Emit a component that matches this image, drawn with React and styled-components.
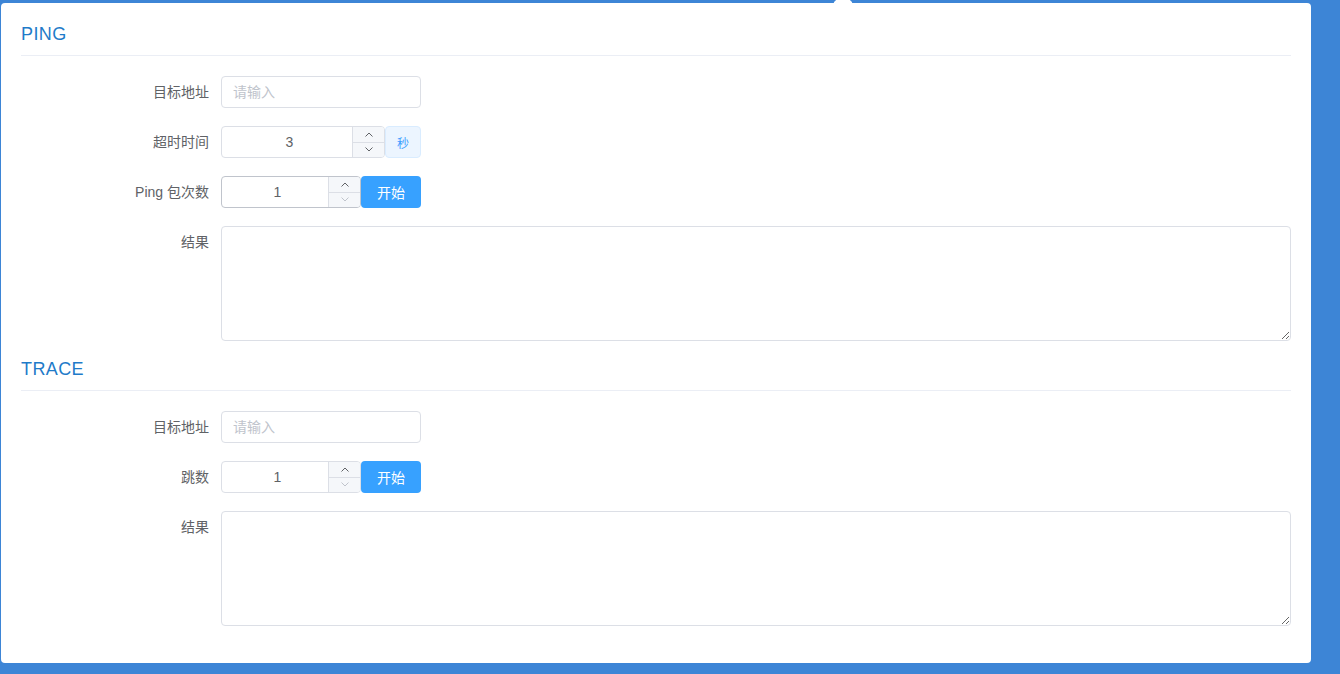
import React from "react";
import styled, { createGlobalStyle } from "styled-components";

const Global = createGlobalStyle`
  html, body { margin: 0; padding: 0; }
  body {
    background: #3d85d6;
    height: 674px;
    overflow: hidden;
    font-family: "Liberation Sans", "Noto Sans CJK SC", Arial, sans-serif;
    font-size: 14px;
    color: #606266;
  }
  * { box-sizing: border-box; }
`;

const Card = styled.div`
  position: relative;
  margin: 3px 0 0 1px;
  width: 1310px;
  background: #fff;
  border-radius: 4px;
  padding: 3px 20px 37px 20px;
`;

const Arrow = styled.div`
  position: absolute;
  top: -6.6px;
  left: 835px;
  width: 14px;
  height: 14px;
  background: #fff;
  transform: rotate(45deg);
  border-radius: 2px;
`;

const SectionTitle = styled.div`
  padding: 16px 0 9px;
  line-height: 24px;
  font-size: 18px;
  letter-spacing: 0.4px;
  color: #1f7bc9;
  border-bottom: 1px solid #ebeef5;
`;

const Form = styled.div`
  margin-top: 20px;
`;

const Row = styled.div`
  display: flex;
  align-items: flex-start;
  margin-bottom: ${(p) => (p.$last ? 0 : 18)}px;
`;

const Label = styled.label`
  flex: 0 0 200px;
  width: 200px;
  padding-right: 12px;
  text-align: right;
  line-height: 32px;
  font-size: 14px;
  color: #606266;
`;

const TextInput = styled.input`
  width: 200px;
  height: 32px;
  border: 1px solid #dcdfe6;
  border-radius: 4px;
  padding: 0 11px;
  font-family: inherit;
  font-size: 14px;
  color: #606266;
  outline: none;
  &::placeholder { color: #c0c4cc; }
`;

const Group = styled.div`
  display: flex;
  width: 200px;
  height: 32px;
`;

const NumberBox = styled.div`
  position: relative;
  flex: 1;
  height: 32px;
  border: 1px solid ${(p) => (p.$dark ? "#c0c4cc" : "#dcdfe6")};
  border-radius: 4px;
  display: flex;
  overflow: hidden;
`;

const NumberValue = styled.div`
  flex: 1;
  padding: 0 10px 0 15px;
  text-align: center;
  line-height: 30px;
  font-size: 14px;
  color: #606266;
`;

const Spinner = styled.div`
  width: 32px;
  display: flex;
  flex-direction: column;
  border-left: 1px solid #dcdfe6;
  background: #f5f7fa;
`;

const SpinBtn = styled.div`
  flex: 1;
  display: flex;
  align-items: center;
  justify-content: center;
  color: ${(p) => (p.$disabled ? "#c0c4cc" : "#606266")};
  & + & { border-top: 1px solid #dcdfe6; }
`;

const Append = styled.div`
  width: 36px;
  height: 32px;
  background: #ecf5ff;
  border: 1px solid #d9ecff;
  border-radius: 4px;
  color: #409eff;
  font-size: 12px;
  display: flex;
  align-items: center;
  justify-content: center;
`;

const Button = styled.button`
  width: 60px;
  height: 32px;
  border: none;
  border-radius: 4px;
  background: #37a1ff;
  color: #fff;
  font-family: inherit;
  font-size: 14px;
  padding: 0;
  cursor: pointer;
`;

const TextArea = styled.textarea`
  display: block;
  flex: 1;
  height: 115px;
  border: 1px solid #dcdfe6;
  border-radius: 4px;
  padding: 5px 11px;
  font-family: inherit;
  font-size: 14px;
  color: #606266;
  outline: none;
  resize: vertical;
  margin: 0;
`;

const Chevron = ({ up }) => (
  <svg width="8" height="5" viewBox="0 0 8 5" fill="none">
    <polyline
      points={up ? "0.5,4.5 4,1 7.5,4.5" : "0.5,0.5 4,4 7.5,0.5"}
      stroke="currentColor"
      strokeWidth="1"
    />
  </svg>
);

const NumberInput = ({ value, dark, downDisabled }) => (
  <NumberBox $dark={dark}>
    <NumberValue>{value}</NumberValue>
    <Spinner>
      <SpinBtn>
        <Chevron up />
      </SpinBtn>
      <SpinBtn $disabled={downDisabled}>
        <Chevron />
      </SpinBtn>
    </Spinner>
  </NumberBox>
);

export default function App() {
  return (
    <>
      <Global />
      <Card>
        <Arrow />
        <SectionTitle>PING</SectionTitle>
        <Form>
          <Row>
            <Label>目标地址</Label>
            <TextInput placeholder="请输入" />
          </Row>
          <Row>
            <Label>超时时间</Label>
            <Group>
              <NumberInput value="3" />
              <Append>秒</Append>
            </Group>
          </Row>
          <Row>
            <Label>Ping 包次数</Label>
            <Group>
              <NumberInput value="1" dark downDisabled />
              <Button>开始</Button>
            </Group>
          </Row>
          <Row $last>
            <Label>结果</Label>
            <TextArea />
          </Row>
        </Form>
        <SectionTitle>TRACE</SectionTitle>
        <Form>
          <Row>
            <Label>目标地址</Label>
            <TextInput placeholder="请输入" />
          </Row>
          <Row>
            <Label>跳数</Label>
            <Group>
              <NumberInput value="1" downDisabled />
              <Button>开始</Button>
            </Group>
          </Row>
          <Row $last>
            <Label>结果</Label>
            <TextArea />
          </Row>
        </Form>
      </Card>
    </>
  );
}
